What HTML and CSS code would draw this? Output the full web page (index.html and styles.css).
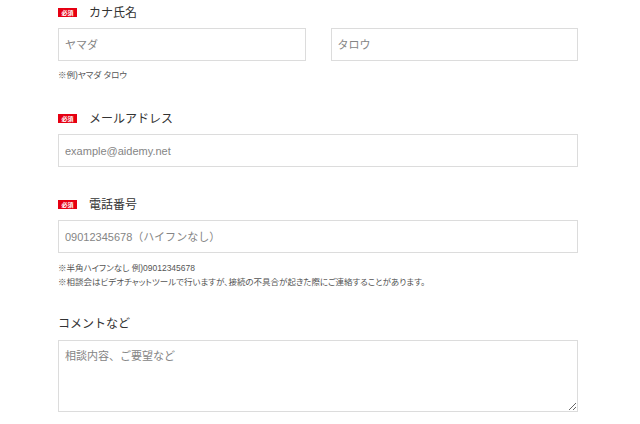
FILE: index.html
```html
<!DOCTYPE html>
<html lang="ja">
<head>
<meta charset="utf-8">
<link rel="stylesheet" href="styles.css">
</head>
<body>
<form class="form">
  <div class="field">
    <div class="label"><span class="req">必須</span><span class="label-text">カナ氏名</span></div>
    <div class="row">
      <input class="input" type="text" placeholder="ヤマダ">
      <input class="input" type="text" placeholder="タロウ">
    </div>
    <p class="note">※例)ヤマダ タロウ</p>
  </div>
  <div class="field f2">
    <div class="label"><span class="req">必須</span><span class="label-text">メールアドレス</span></div>
    <input class="input" type="text" placeholder="example@aidemy.net">
  </div>
  <div class="field f3">
    <div class="label"><span class="req">必須</span><span class="label-text">電話番号</span></div>
    <input class="input" type="text" placeholder="09012345678（ハイフンなし）">
    <p class="note">※半角ハイフンなし 例)09012345678<br>※相談会はビデオチャットツールで行いますが、接続の不具合が起きた際にご連絡することがあります。</p>
  </div>
  <div class="field f4">
    <div class="label"><span class="label-text plain">コメントなど</span></div>
    <textarea class="textarea" placeholder="相談内容、ご要望など"></textarea>
  </div>
</form>
</body>
</html>
```
FILE: styles.css
```css
* { box-sizing: border-box; }
html, body { margin: 0; padding: 0; background: #fff; }
body {
  font-family: "Liberation Sans", "Noto Sans CJK JP", sans-serif;
  color: #333;
  overflow: hidden;
}
.form { width: 520px; margin: 0 0 0 58px; padding-top: 4px; }
.field { margin-bottom: 28px; }
.field.f2 { margin-bottom: 29px; }
.field.f3 { margin-bottom: 26px; }
.label {
  display: flex;
  align-items: center;
  height: 16px;
  margin-bottom: 8px;
}
.field.f4 .label { margin-bottom: 9px; }
.req {
  display: inline-flex;
  align-items: center;
  justify-content: center;
  width: 19px;
  height: 9px;
  background: #e60012;
  color: #fff;
  font-size: 6px;
  line-height: 9px;
  font-weight: bold;
  font-family: "Noto Sans CJK JP", sans-serif;
  margin-right: 12px;
}
.label-text {
  font-size: 12px;
  line-height: 16px;
  color: #333;
  font-family: "Noto Sans CJK JP", sans-serif;
}
.row { display: flex; gap: 25px; }
.row .input { flex: 1; }
.input {
  display: block;
  width: 100%;
  height: 33px;
  border: 1px solid #dcdcdc;
  border-radius: 0;
  padding: 0 6px;
  font-size: 11px;
  font-family: "Liberation Sans", "Noto Sans CJK JP", sans-serif;
  color: #333;
  background: #fff;
  outline: none;
}
.input::placeholder, .textarea::placeholder { color: #858585; }
.note {
  margin: 7px 0 0;
  font-size: 8.5px;
  line-height: 14px;
  color: #555;
  font-family: "Liberation Sans", "Noto Sans CJK JP", sans-serif;
  font-feature-settings: "palt";
}
.field.f3 .note { margin-top: 8px; }
.textarea {
  display: block;
  width: 100%;
  height: 72px;
  border: 1px solid #dcdcdc;
  border-radius: 0;
  padding: 6px 6px;
  font-size: 11px;
  line-height: 16px;
  font-family: "Noto Sans CJK JP", sans-serif;
  color: #333;
  resize: vertical;
  background: #fff;
  outline: none;
}
```
